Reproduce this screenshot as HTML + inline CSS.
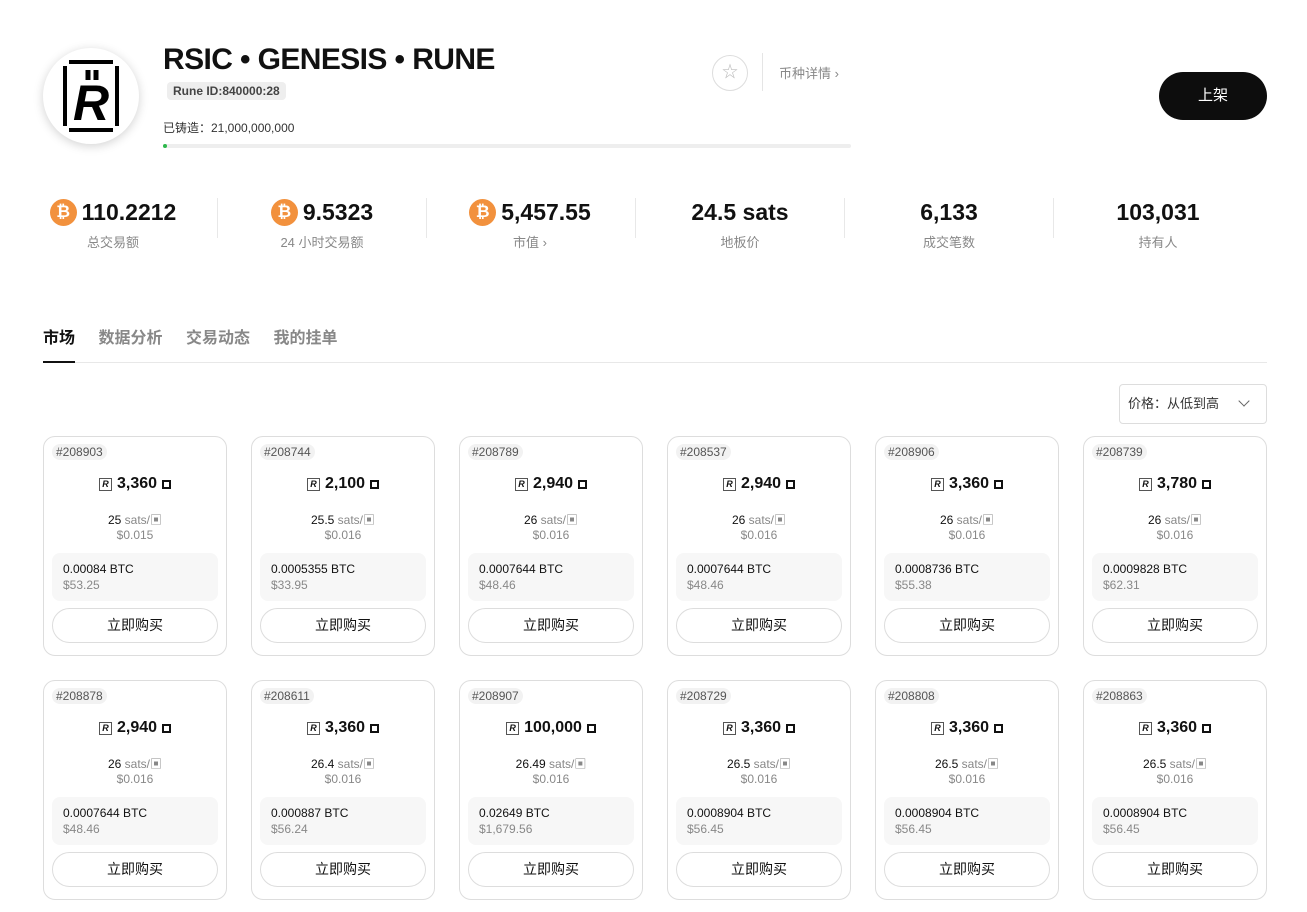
<!DOCTYPE html>
<html><head><meta charset="utf-8"><style>
*{margin:0;padding:0;box-sizing:border-box}
body{width:1307px;height:912px;background:#fff;font-family:"Liberation Sans","Noto Sans CJK SC",sans-serif;color:#111;position:relative;overflow:hidden}
.abs{position:absolute}
.logo{left:43px;top:48px;width:96px;height:96px;border-radius:50%;background:#fff;box-shadow:0 2px 10px rgba(0,0,0,.18)}
.title{left:163px;top:43px;font-size:30px;font-weight:bold;letter-spacing:-0.6px}
.rid{left:167px;top:82px;background:#eee;border-radius:4px;font-size:12px;font-weight:bold;color:#444;padding:1px 6px;line-height:16px}
.mint{left:163px;top:119px;font-size:12px;color:#333}
.bar{left:163px;top:144px;width:688px;height:4px;background:#eee;border-radius:2px}
.stat{top:196px;width:204px;text-align:center}
.stat .n{font-size:23px;font-weight:bold;height:32px;display:flex;align-items:center;justify-content:center;gap:5px}
.stat .l{font-size:13px;color:#888;margin-top:4px}
.btc{width:27px;height:27px;border-radius:50%;background:#f2913d;color:#fff;font-size:17px;font-weight:bold;display:inline-flex;align-items:center;justify-content:center}
.div{top:198px;width:1px;height:40px;background:#e8e8e8}
.tabs{left:43px;top:324px;font-size:16px;font-weight:bold;color:#888}
.tabs span{margin-right:23.5px}
.card{width:184px;height:220px;border:1px solid #ddd;border-radius:12px}
.card .id{position:absolute;left:8px;top:7px;background:#f2f2f2;border-radius:8px;font-size:12px;color:#555;padding:1px 4px}
.card .p{position:absolute;top:38px;width:100%;text-align:center;font-size:16px;font-weight:bold;display:flex;justify-content:center;align-items:center;gap:5px}
.ri{display:inline-block;width:13px;height:13px;border:1px solid #555;font-size:9px;line-height:11px;text-align:center;font-weight:bold;font-style:italic}
.sq{display:inline-block;width:9px;height:9px;border:2px solid #111;position:relative}
.card .s{position:absolute;top:74px;width:100%;text-align:center;font-size:12px}
.card .s i{font-style:normal;color:#888}
.card .u{position:absolute;top:91px;width:100%;text-align:center;font-size:12px;color:#888}
.card .box{position:absolute;left:8px;top:116px;width:166px;height:48px;background:#f7f7f7;border-radius:8px;padding:8px 11px;font-size:12px;line-height:16px}
.card .box i{font-style:normal;color:#888;display:block}
.card .b{position:absolute;left:8px;top:171px;width:166px;height:35px;border:1px solid #ddd;border-radius:18px;text-align:center;line-height:33px;font-size:14px}
</style></head><body>
<div class="abs logo"><svg width="96" height="96" viewBox="0 0 96 96"><path d="M26 14h44M26 82h44M22 18v60M74 18v60" stroke="#000" stroke-width="4"/><text x="48" y="72" font-family="Liberation Sans" font-size="50" font-weight="bold" font-style="italic" text-anchor="middle">R</text><path d="M45 22v10M53 22v10" stroke="#000" stroke-width="5"/></svg></div>
<div class="abs title">RSIC • GENESIS • RUNE</div>
<div class="abs rid">Rune ID:840000:28</div>
<div class="abs mint">已铸造：21,000,000,000</div>
<div class="abs bar"><div style="width:4px;height:4px;background:#2db84b;border-radius:2px"></div></div>
<div class="abs" style="left:712px;top:55px;width:36px;height:36px;border:1px solid #ddd;border-radius:50%;color:#bbb;text-align:center;line-height:34px;font-size:16px">☆</div>
<div class="abs" style="left:762px;top:53px;width:1px;height:38px;background:#e5e5e5"></div>
<div class="abs" style="left:779px;top:63px;font-size:13px;color:#888">币种详情 ›</div>
<div class="abs" style="left:1159px;top:72px;width:108px;height:48px;background:#0d0d0d;border-radius:24px;color:#fff;text-align:center;line-height:48px;font-size:15px">上架</div>

<div class="abs stat" style="left:11px"><div class="n"><span class="btc">₿</span>110.2212</div><div class="l">总交易额</div></div>
<div class="abs div" style="left:217px"></div>
<div class="abs stat" style="left:220px"><div class="n"><span class="btc">₿</span>9.5323</div><div class="l">24 小时交易额</div></div>
<div class="abs div" style="left:426px"></div>
<div class="abs stat" style="left:428px"><div class="n"><span class="btc">₿</span>5,457.55</div><div class="l">市值 ›</div></div>
<div class="abs div" style="left:635px"></div>
<div class="abs stat" style="left:638px"><div class="n">24.5 sats</div><div class="l">地板价</div></div>
<div class="abs div" style="left:844px"></div>
<div class="abs stat" style="left:847px"><div class="n">6,133</div><div class="l">成交笔数</div></div>
<div class="abs div" style="left:1053px"></div>
<div class="abs stat" style="left:1056px"><div class="n">103,031</div><div class="l">持有人</div></div>

<div class="abs tabs"><span style="color:#111">市场</span><span>数据分析</span><span>交易动态</span><span>我的挂单</span></div>
<div class="abs" style="left:43px;top:362px;width:1224px;height:1px;background:#e8e8e8"></div>
<div class="abs" style="left:43px;top:361px;width:32px;height:2px;background:#111"></div>
<div class="abs" style="left:1119px;top:384px;width:148px;height:40px;border:1px solid #ddd;border-radius:4px;font-size:13px;color:#333;line-height:38px;padding-left:8px">价格：从低到高 <span style="position:absolute;right:18px;top:12px;width:8px;height:8px;border-right:1.5px solid #666;border-bottom:1.5px solid #666;transform:rotate(45deg)"></span></div>

<div id="cards"></div>
<script>
var d=[["208903","3,360","25","0.015","0.00084","53.25"],["208744","2,100","25.5","0.016","0.0005355","33.95"],["208789","2,940","26","0.016","0.0007644","48.46"],["208537","2,940","26","0.016","0.0007644","48.46"],["208906","3,360","26","0.016","0.0008736","55.38"],["208739","3,780","26","0.016","0.0009828","62.31"],["208878","2,940","26","0.016","0.0007644","48.46"],["208611","3,360","26.4","0.016","0.000887","56.24"],["208907","100,000","26.49","0.016","0.02649","1,679.56"],["208729","3,360","26.5","0.016","0.0008904","56.45"],["208808","3,360","26.5","0.016","0.0008904","56.45"],["208863","3,360","26.5","0.016","0.0008904","56.45"]];
var h="";d.forEach(function(c,i){var x=43+(i%6)*208,y=436+Math.floor(i/6)*244;
h+='<div class="abs card" style="left:'+x+'px;top:'+y+'px"><div class="id">#'+c[0]+'</div><div class="p"><span class="ri">R</span>'+c[1]+'<span class="sq"></span></div><div class="s"><b style="font-weight:normal">'+c[2]+'</b> <i>sats/▣</i></div><div class="u">$'+c[3]+'</div><div class="box">'+c[4]+' BTC<i>$'+c[5]+'</i></div><div class="b">立即购买</div></div>';});
document.getElementById("cards").innerHTML=h;
</script>
</body></html>
